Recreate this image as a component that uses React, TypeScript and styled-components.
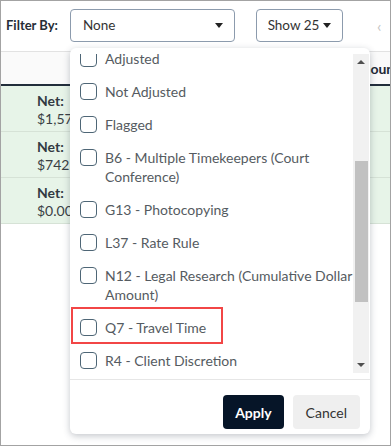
import styled, { createGlobalStyle } from "styled-components";

const GlobalStyle = createGlobalStyle`
  body {
    margin: 0;
    background: #ffffff;
    font-family: Lato, "Open Sans", sans-serif;
    color: #333333;
  }
`;

const Frame = styled.div`
  position: relative;
  width: 391px;
  height: 446px;
  box-sizing: border-box;
  border: 1px solid #a3a3a3;
  overflow: hidden;
  background: #ffffff;
`;

const Toolbar = styled.div`
  display: flex;
  align-items: center;
  height: 50px;
  padding-left: 5px;
  box-sizing: border-box;
  padding-bottom: 2px;
`;

const FilterLabel = styled.span`
  font-size: 13px;
  font-weight: 700;
  color: #262d36;
  width: 64px;
`;

const SelectBox = styled.div<{ $width: number; $center?: boolean }>`
  flex: none;
  display: flex;
  align-items: center;
  justify-content: ${(p) => (p.$center ? "center" : "space-between")};
  width: ${(p) => p.$width}px;
  height: 33px;
  box-sizing: border-box;
  padding: ${(p) => (p.$center ? "0" : "0 11px 0 12px")};
  border: 1px solid #8c9bad;
  border-radius: 4px;
  font-size: 13.5px;
  color: #333333;
  white-space: nowrap;
  margin-right: 21px;
`;

const Caret = styled.span`
  display: inline-block;
  margin-left: 4px;
  border-top: 5px solid #222222;
  border-left: 4px solid transparent;
  border-right: 4px solid transparent;
`;

const PagerArrow = styled.span`
  margin-left: 13px;
  font-size: 16px;
  color: #c4c4c4;
`;

const HeaderRow = styled.div`
  display: flex;
  align-items: center;
  height: 32px;
  border-top: 1px solid #e2e2e2;
  border-bottom: 2px solid #222e3b;
  background: #fafafa;
  padding-left: 348px;
  font-size: 14px;
  font-weight: 700;
  color: #1f2a36;
  white-space: nowrap;
`;

const Row = styled.div`
  height: 46px;
  box-sizing: border-box;
  background: #e7f4e8;
  border-bottom: 1px solid #d6e2d6;
  padding: 6px 0 0 36px;
  font-size: 14px;
  line-height: 18px;
  color: #3a3f45;
`;

const NetLabel = styled.div`
  font-weight: 700;
  color: #333a42;
`;

const Panel = styled.div`
  position: absolute;
  left: 69px;
  top: 47px;
  width: 300px;
  height: 386px;
  background: #ffffff;
  border-radius: 6px;
  box-shadow: 0 2px 7px rgba(40, 50, 70, 0.28);
  display: flex;
  flex-direction: column;
  overflow: hidden;
`;

const ListArea = styled.div`
  display: flex;
  padding: 6px 1px 6px 0;
  height: 331px;
  box-sizing: border-box;
`;

const Viewport = styled.div`
  flex: 1;
  overflow: hidden;
  padding-top: 1px;
`;

const List = styled.div`
  margin-top: -13px;
`;

const Item = styled.div<{ $marked?: boolean }>`
  position: relative;
  display: flex;
  align-items: flex-start;
  gap: 8px;
  padding: 7px 0 7px 10px;
  font-size: 14px;
  line-height: 19px;
  color: #555b61;

  &::after {
    content: "";
    display: ${(p) => (p.$marked ? "block" : "none")};
    position: absolute;
    left: 1px;
    top: -4px;
    width: 152px;
    height: 37px;
    box-sizing: border-box;
    border: 2px solid #f24646;
  }
`;

const Box = styled.span`
  flex: none;
  width: 17px;
  height: 17px;
  box-sizing: border-box;
  margin-top: 1px;
  border: 1.5px solid #4e6676;
  border-radius: 4px;
  background: #ffffff;
`;

const Scrollbar = styled.div`
  width: 16px;
  display: flex;
  flex-direction: column;
  align-items: center;
  background: #f1f1f1;
`;

const ArrowCell = styled.div`
  height: 16px;
  display: flex;
  align-items: center;
  justify-content: center;
  width: 100%;
`;

const Arrow = styled.span<{ $down?: boolean }>`
  border-left: 4px solid transparent;
  border-right: 4px solid transparent;
  ${(p) => (p.$down ? "border-top: 4px solid #505050;" : "border-bottom: 4px solid #505050;")}
`;

const Track = styled.div`
  flex: 1;
  width: 100%;
  padding: 91px 1px 0 2px;
  box-sizing: border-box;
`;

const Thumb = styled.div`
  height: 141px;
  background: #c1c1c1;
`;

const Footer = styled.div`
  flex: 1;
  display: flex;
  justify-content: flex-end;
  align-items: flex-start;
  gap: 9px;
  padding: 15px 10px 0 0;
  border-top: 1px solid #e6e6e6;
`;

const Button = styled.button<{ $primary?: boolean }>`
  height: 34px;
  padding: 0 ${(p) => (p.$primary ? 12 : 13)}px;
  border: none;
  border-radius: 4px;
  font-family: Lato, sans-serif;
  font-size: 14px;
  font-weight: ${(p) => (p.$primary ? 700 : 400)};
  background: ${(p) => (p.$primary ? "#061528" : "#efefef")};
  color: ${(p) => (p.$primary ? "#ffffff" : "#333333")};
`;

const options = [
  "Adjusted",
  "Not Adjusted",
  "Flagged",
  "B6 - Multiple Timekeepers (Court Conference)",
  "G13 - Photocopying",
  "L37 - Rate Rule",
  "N12 - Legal Research (Cumulative Dollar Amount)",
  "Q7 - Travel Time",
  "R4 - Client Discretion",
];

const rows = ["$1,574.00", "$742.50", "$0.00"];

export default function App() {
  return (
    <>
      <GlobalStyle />
      <Frame>
        <Toolbar>
          <FilterLabel>Filter By:</FilterLabel>
          <SelectBox $width={165}>
            None
            <Caret />
          </SelectBox>
          <SelectBox $width={87} $center>
            Show 25
            <Caret />
          </SelectBox>
          <PagerArrow>‹</PagerArrow>
        </Toolbar>
        <HeaderRow>Amount</HeaderRow>
        {rows.map((r) => (
          <Row key={r}>
            <NetLabel>Net:</NetLabel>
            {r}
          </Row>
        ))}
        <Panel>
          <ListArea>
            <Viewport>
              <List>
                {options.map((o) => (
                  <Item key={o} $marked={o.startsWith("Q7")}>
                    <Box />
                    <span>{o}</span>
                  </Item>
                ))}
              </List>
            </Viewport>
            <Scrollbar>
              <ArrowCell>
                <Arrow />
              </ArrowCell>
              <Track>
                <Thumb />
              </Track>
              <ArrowCell>
                <Arrow $down />
              </ArrowCell>
            </Scrollbar>
          </ListArea>
          <Footer>
            <Button $primary>Apply</Button>
            <Button>Cancel</Button>
          </Footer>
        </Panel>
      </Frame>
    </>
  );
}
